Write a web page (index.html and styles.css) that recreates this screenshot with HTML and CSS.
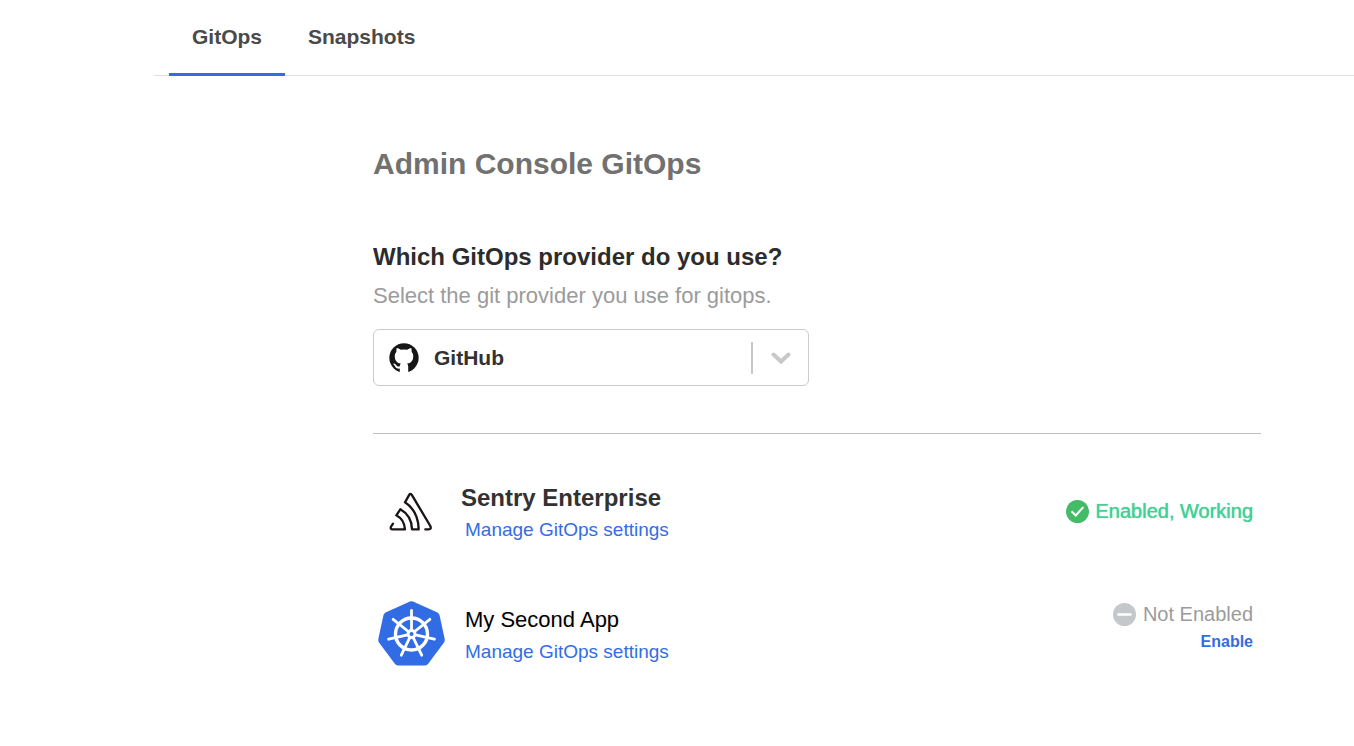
FILE: index.html
```
<!DOCTYPE html>
<html lang="en">
<head>
<meta charset="utf-8">
<title>Admin Console GitOps</title>
<meta name="viewport" content="width=device-width, initial-scale=1">
<link rel="stylesheet" href="styles.css">
</head>
<body>
<nav class="tabs" aria-label="Sections">
  <a class="tab tab-active" href="#gitops" aria-current="page">GitOps</a>
  <a class="tab" href="#snapshots">Snapshots</a>
</nav>
<main class="content">
  <h1 class="title">Admin Console GitOps</h1>
  <section class="provider">
    <label class="question" for="provider">Which GitOps provider do you use?</label>
    <p class="hint">Select the git provider you use for gitops.</p>
    <div class="picker">
      <svg class="github" viewBox="10 8 89 89" aria-hidden="true"><circle cx="54.500" cy="52" r="43.500" fill="#161616"/><path d="M33 23Q38 23 45 28Q54 26 64 28Q71 23 76 23Q78 29 77 34Q82 39 82 48Q82 67 64 69Q67 73 67 78V97H42V84Q31 86 27 76Q25 72 22 70Q26 67 31 73Q35 80 42 77Q42 73 45 69Q27 67 27 48Q27 39 32 34Q31 29 33 23z" fill="#fff"/></svg>
      <select class="select" id="provider"><option>GitHub</option></select>
      <span class="divider"></span>
      <svg class="chevron" viewBox="0 0 20 14" aria-hidden="true"><path d="M2.5 3.5 10 10.5l7.500-7"/></svg>
    </div>
  </section>
  <ul class="apps">
    <li class="app">
      <span class="logo">
        <svg class="sentry" viewBox="28 24 132 120" aria-hidden="true"><path d="M40 122 34 131Q31 139 39 139H76Q74 110 50 97L62 79Q96 98 97 139H117Q116 84 76 58L89 35Q92 30 96 35L152 129Q156 139 147 139H137"/></svg>
      </span>
      <div class="info">
        <h2 class="name name-strong">Sentry Enterprise</h2>
        <a class="manage" href="#sentry">Manage GitOps settings</a>
      </div>
      <div class="state">
        <span class="status status-on">
          <svg class="badge" viewBox="0 0 24 24" aria-hidden="true"><circle cx="12" cy="12" r="12" fill="#44bb66"/><path d="m6.500 12.500 3.700 3.700L17.500 8" fill="none" stroke="#fff" stroke-width="2.200" stroke-linecap="round"/></svg>
          Enabled, Working
        </span>
      </div>
    </li>
    <li class="app">
      <span class="logo">
        <svg class="kubernetes" viewBox="-33.500 -33 67 65" aria-hidden="true">
          <path d="M-1.500-32.500Q0-33 1.500-32.500L26-21.500Q27.500-20.500 28-19L33.200 5Q33.500 7 32.500 8.500L16.500 30Q15 31.500 13 31.500H-13Q-15 31.500-16.500 30L-32.500 8.500Q-33.500 7-33.200 5L-28-19Q-27.500-20.500-26-21.500z" fill="#326ce5"/>
          <g fill="none" stroke="#fff" stroke-width="2.800" stroke-linecap="round">
            <circle r="16" stroke-width="3.400"/>
            <path d="M0-4V-23.500"/>
            <path d="M0-4V-23.500" transform="rotate(51.430)"/>
            <path d="M0-4V-23.500" transform="rotate(102.860)"/>
            <path d="M0-4V-23.500" transform="rotate(154.290)"/>
            <path d="M0-4V-23.500" transform="rotate(205.710)"/>
            <path d="M0-4V-23.500" transform="rotate(257.140)"/>
            <path d="M0-4V-23.500" transform="rotate(308.570)"/>
            <circle r="3.500" stroke-width="3"/>
          </g>
        </svg>
      </span>
      <div class="info">
        <h2 class="name"><span class="halo">My Second App</span></h2>
        <a class="manage" href="#second">Manage GitOps settings</a>
      </div>
      <div class="state state-top">
        <span class="status">
          <svg class="badge" viewBox="0 0 24 24" aria-hidden="true"><circle cx="12" cy="12" r="12" fill="#c4c8ca"/><path d="M5.500 12h13" stroke="#fff" stroke-width="2.400" stroke-linecap="round"/></svg>
          Not Enabled
        </span>
        <button class="enable" type="button">Enable</button>
      </div>
    </li>
  </ul>
</main>
</body>
</html>
```
FILE: styles.css
```
* { box-sizing: border-box; }
body {
  margin: 0;
  background: #fff;
  color: #323232;
  font-family: "Liberation Sans", Arial, Helvetica, sans-serif;
}
.tabs {
  display: flex;
  margin-left: 154px;
  padding-left: 15px;
  border-bottom: 1px solid #dfe1e3;
}
.tab {
  margin-bottom: -1px;
  padding: 24px 23px 24px;
  border-bottom: 3px solid transparent;
  color: #4a4a4a;
  font-size: 21px;
  font-weight: 700;
  line-height: 25px;
  text-decoration: none;
}
.tab-active { border-bottom-color: #326de6; }
.content { margin: 0 93px 0 373px; padding-top: 70px; }
.title {
  margin: 0;
  color: #717171;
  font-size: 30px;
  line-height: 36px;
}
.provider {
  margin-top: 60px;
  padding-bottom: 47px;
  border-bottom: 1px solid #bfbfbf;
}
.question {
  display: block;
  color: #2c2c2c;
  font-size: 24px;
  font-weight: 700;
  line-height: 30px;
}
.hint {
  margin: 10px 0 19px;
  color: #9b9b9b;
  font-size: 22px;
  line-height: 28px;
}
.picker {
  display: flex;
  align-items: center;
  max-width: 436px;
  height: 57px;
  padding: 0 17px 0 15px;
  border: 1px solid #c9cbcd;
  border-radius: 6px;
}
.github { width: 30px; height: 30px; }
.select {
  flex: 1;
  margin-left: 15px;
  padding: 0;
  border: 0;
  appearance: none;
  background: none;
  color: #323232;
  font: 700 21px/28px "Liberation Sans", Arial, sans-serif;
}
.divider { width: 2px; height: 32px; background: #c8c8c8; }
.chevron {
  width: 20px;
  height: 14px;
  margin-left: 18px;
  fill: none;
  stroke: #c8c8c8;
  stroke-width: 4;
  stroke-linecap: round;
}
.apps {
  display: grid;
  gap: 56px;
  margin: 0;
  padding: 44px 8px 0 4px;
  list-style: none;
}
.app { display: flex; align-items: center; }
.logo { display: flex; flex: none; justify-content: center; width: 68px; }
.sentry {
  width: 44px;
  height: 40px;
  fill: none;
  stroke: #1b1519;
  stroke-width: 7;
  stroke-linecap: round;
  stroke-linejoin: round;
}
.kubernetes { width: 67px; height: 65px; }
.info { flex: 1; padding: 2px 0 0 20px; }
.name {
  margin: 0;
  color: #000;
  font-size: 22px;
  font-weight: 400;
  line-height: 36px;
}
.name-strong {
  margin-left: -4px;
  color: #323232;
  font-size: 24px;
  font-weight: 700;
}
.halo {
  text-shadow: 0 0 2px #fff, 0 0 4px #e8e8e8;
}
.manage {
  display: block;
  color: #326de6;
  font-size: 19px;
  line-height: 28px;
  text-decoration: none;
}
.state { display: flex; flex-direction: column; align-items: flex-end; }
.state-top { align-self: flex-start; }
.status {
  display: flex;
  align-items: center;
  gap: 7px;
  color: #9b9b9b;
  font-size: 20px;
  line-height: 28px;
}
.status-on { color: #44cf94; text-shadow: 0 0 1px #44cf94; }
.badge { width: 23px; height: 23px; }
.enable {
  padding: 0;
  border: 0;
  background: none;
  color: #326de6;
  font: 700 16px/28px "Liberation Sans", Arial, sans-serif;
}
```
